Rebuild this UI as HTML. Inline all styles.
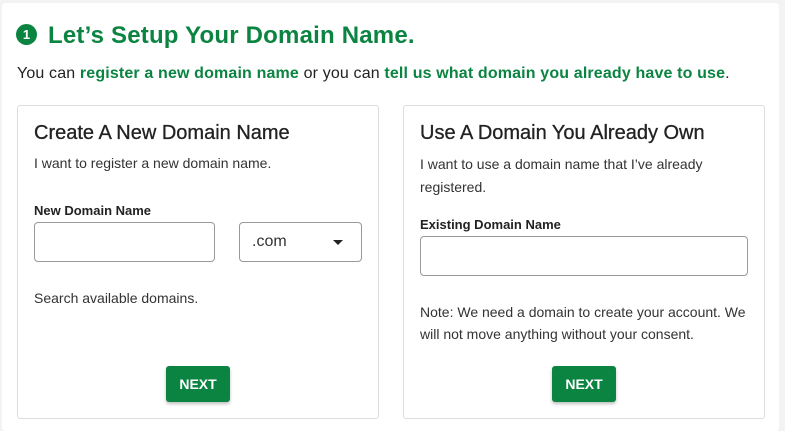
<!DOCTYPE html>
<html style="height:431px;overflow:hidden"><head><style>
body{margin:0;width:785px;height:431px;background:#f3f3f3;font-family:"Liberation Sans",sans-serif;position:relative;overflow:hidden}
.panel{position:absolute;left:2px;top:3px;width:777px;height:428px;background:#fff;border-radius:3px}
.a{position:absolute;white-space:nowrap}
h1{position:absolute;left:48px;top:22px;margin:0;font-size:24px;font-weight:bold;color:#0b8442;letter-spacing:0.2px}
.num{position:absolute;left:16px;top:24px;width:21px;height:21px;border-radius:50%;background:#0b8442;color:#fff;font-size:13px;font-weight:bold;text-align:center;line-height:21px}
.sub{left:17px;top:65px;font-size:16px;color:#222;letter-spacing:0.15px}
.sub b{color:#0b8442}
.card{position:absolute;top:105px;width:360px;height:312px;border:1px solid #ddd;border-radius:3px;background:#fff}
.t{font-size:20px;color:#222;-webkit-text-stroke:0.3px #222}
.p{font-size:14px;color:#333}
.l{font-size:13px;font-weight:bold;color:#222}
.in{position:absolute;border:1px solid #999;border-radius:4px;background:#fff;box-sizing:border-box}
.btn{position:absolute;width:64px;height:36px;background:#0b8442;color:#fff;font-size:14px;font-weight:bold;text-align:center;line-height:36px;border-radius:3px;box-shadow:0 2px 3px rgba(0,0,0,.25)}
</style></head><body>
<div class="panel"></div>
<div class="num">1</div>
<h1>Let’s Setup Your Domain Name.</h1>
<div class="a sub">You can <b>register a new domain name</b> or you can <b>tell us what domain you already have to use</b>.</div>

<div class="card" style="left:17px"></div>
<div class="a t" style="left:34px;top:122px">Create A New Domain Name</div>
<div class="a p" style="left:34px;top:155px">I want to register a new domain name.</div>
<div class="a l" style="left:34px;top:203px">New Domain Name</div>
<div class="in" style="left:34px;top:222px;width:181px;height:40px"></div>
<div class="in" style="left:239px;top:222px;width:123px;height:40px"></div>
<div class="a" style="left:252px;top:233px;font-size:16px;color:#333">.com</div>
<div class="a" style="left:333px;top:240px;width:0;height:0;border-left:5px solid transparent;border-right:5px solid transparent;border-top:5px solid #222"></div>
<div class="a p" style="left:34px;top:290px">Search available domains.</div>
<div class="btn" style="left:166px;top:366px">NEXT</div>

<div class="card" style="left:403px"></div>
<div class="a t" style="left:420px;top:122px">Use A Domain You Already Own</div>
<div class="a p" style="left:420px;top:153px;line-height:23px">I want to use a domain name that I’ve already<br>registered.</div>
<div class="a l" style="left:420px;top:217px">Existing Domain Name</div>
<div class="in" style="left:420px;top:236px;width:328px;height:40px"></div>
<div class="a p" style="left:420px;top:301px;line-height:22px">Note: We need a domain to create your account. We<br>will not move anything without your consent.</div>
<div class="btn" style="left:552px;top:366px">NEXT</div>
</body></html>
